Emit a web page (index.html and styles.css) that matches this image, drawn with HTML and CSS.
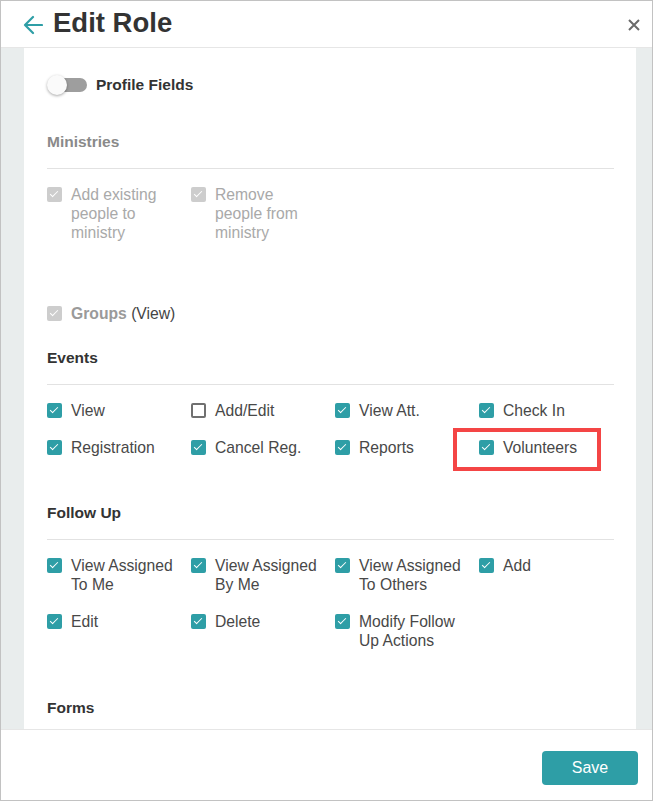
FILE: index.html
```html
<!DOCTYPE html>
<html lang="en">
<head>
    <meta charset="UTF-8">
    <meta name="viewport" content="width=device-width, initial-scale=1.0">
    <title>Edit Role</title>
    <link rel="stylesheet" href="styles.css">
</head>
<body>
    <div class="modal">
        <header class="modal-header">
            <svg class="back-icon" width="20" height="20" viewBox="0 0 20 20">
                <path d="M19 10H2M10 2L2 10l8 8" fill="none" stroke="#2e9ea6" stroke-width="2.2" stroke-linecap="round" stroke-linejoin="round"/>
            </svg>
            <h1 class="title">Edit Role</h1>
            <svg class="close-icon" width="12" height="12" viewBox="0 0 12 12">
                <path d="M1 1l10 10M11 1L1 11" stroke="#6a6a6a" stroke-width="2"/>
            </svg>
        </header>

        <div class="modal-body">
            <div class="panel">
                <div class="toggle-row">
                    <span class="switch"><span class="knob"></span></span>
                    <span class="toggle-label">Profile Fields</span>
                </div>

                <section class="perm disabled">
                    <h2 class="perm-title">Ministries</h2>
                    <div class="perm-grid">
                        <label class="item"><span class="cb on"></span><span class="text">Add existing people to ministry</span></label>
                        <label class="item"><span class="cb on"></span><span class="text">Remove people from ministry</span></label>
                    </div>
                    <label class="item single"><span class="cb on"></span><span class="text"><b>Groups</b> <span class="dark">(View)</span></span></label>
                </section>

                <section class="perm">
                    <h2 class="perm-title">Events</h2>
                    <div class="perm-grid">
                        <label class="item"><span class="cb on"></span><span class="text">View</span></label>
                        <label class="item"><span class="cb"></span><span class="text">Add/Edit</span></label>
                        <label class="item"><span class="cb on"></span><span class="text">View Att.</span></label>
                        <label class="item"><span class="cb on"></span><span class="text">Check In</span></label>
                        <label class="item"><span class="cb on"></span><span class="text">Registration</span></label>
                        <label class="item"><span class="cb on"></span><span class="text">Cancel Reg.</span></label>
                        <label class="item"><span class="cb on"></span><span class="text">Reports</span></label>
                        <label class="item highlight"><span class="cb on"></span><span class="text">Volunteers</span></label>
                    </div>
                </section>

                <section class="perm">
                    <h2 class="perm-title">Follow Up</h2>
                    <div class="perm-grid">
                        <label class="item"><span class="cb on"></span><span class="text">View Assigned To Me</span></label>
                        <label class="item"><span class="cb on"></span><span class="text">View Assigned By Me</span></label>
                        <label class="item"><span class="cb on"></span><span class="text">View Assigned To Others</span></label>
                        <label class="item"><span class="cb on"></span><span class="text">Add</span></label>
                        <label class="item"><span class="cb on"></span><span class="text">Edit</span></label>
                        <label class="item"><span class="cb on"></span><span class="text">Delete</span></label>
                        <label class="item"><span class="cb on"></span><span class="text">Modify Follow Up Actions</span></label>
                    </div>
                </section>

                <section class="perm">
                    <h2 class="perm-title">Forms</h2>
                </section>
            </div>
        </div>

        <footer class="modal-footer">
            <button class="save-btn">Save</button>
        </footer>
    </div>
</body>
</html>
```

FILE: styles.css
```css
html, body {
    margin: 0;
    height: 100%;
    font-family: "Liberation Sans", Arial, sans-serif;
    color: #444;
}

.modal {
    width: 653px;
    height: 801px;
    box-sizing: border-box;
    border: 1px solid #c2c2c2;
    display: flex;
    flex-direction: column;
    background: #fff;
    overflow: hidden;
}

.modal-header {
    height: 46px;
    flex: none;
    border-bottom: 1px solid #e6e6e6;
    display: flex;
    align-items: center;
    padding: 0 12px 0 22px;
}

.back-icon {
    flex: none;
    margin-top: 1px;
}

.title {
    margin: -3px 0 0 10px;
    font-size: 27.5px;
    font-weight: bold;
    color: #333;
    flex: 1;
}

.close-icon {
    flex: none;
    margin-top: 1px;
}

.modal-body {
    flex: 1;
    min-height: 0;
    background: #e9eded;
    display: flex;
    padding: 0 16px 0 23px;
}

.panel {
    flex: 1;
    background: #fff;
    padding: 27px 22px 0 23px;
    overflow: hidden;
}

.toggle-row {
    display: flex;
    align-items: center;
    height: 20px;
}

.switch {
    position: relative;
    width: 40px;
    height: 20px;
    flex: none;
}
.switch::before {
    content: '';
    position: absolute;
    left: 8px;
    top: 3px;
    width: 32px;
    height: 14px;
    border-radius: 7px;
    background: #9e9e9e;
}
.knob {
    position: absolute;
    left: 0;
    top: 0;
    width: 20px;
    height: 20px;
    border-radius: 50%;
    background: #fafafa;
    box-shadow: 0 1px 3px rgba(0, 0, 0, 0.35);
}

.toggle-label {
    margin-left: 9px;
    font-weight: bold;
    font-size: 15.5px;
    color: #333;
}

.perm {
    margin-top: 37px;
}
.perm + .perm {
    margin-top: 24px;
}
.perm + .perm:last-child {
    margin-top: 26px;
}

.perm-title {
    margin: 0;
    font-size: 15.5px;
    line-height: 19px;
    font-weight: bold;
    color: #333;
    padding-bottom: 17px;
    border-bottom: 1px solid #e2e2e2;
}

.perm-grid {
    display: grid;
    grid-template-columns: 144px 144px 144px 1fr;
    row-gap: 18px;
    padding: 16px 0 22px;
}

.item {
    display: flex;
    align-items: flex-start;
    font-size: 15.7px;
    line-height: 19px;
    color: #484848;
    position: relative;
}

.text {
    margin-left: 9px;
    max-width: 108px;
}

.cb {
    flex: none;
    position: relative;
    width: 15px;
    height: 15px;
    margin-top: 2px;
    box-sizing: border-box;
    border: 2px solid #707070;
    border-radius: 2px;
    background: #fff;
}
.cb.on {
    border: none;
    background: #2e9ea6;
}
.cb.on::after {
    content: '';
    position: absolute;
    left: 5px;
    top: 2px;
    width: 3px;
    height: 7px;
    border: solid #fff;
    border-width: 0 1.5px 1.5px 0;
    transform: rotate(45deg);
}

.disabled .perm-title {
    color: #8a8a8a;
}
.disabled .item {
    color: #a9a9a9;
}
.disabled .cb.on {
    background: #cdcdcd;
}
.disabled .perm-grid {
    padding-bottom: 62px;
}
.disabled + .perm {
    margin-top: 25px;
}
.single .text {
    max-width: none;
}
.single b {
    color: #9a9a9a;
}
.single .dark {
    color: #444;
}

.highlight::after {
    content: '';
    position: absolute;
    left: -26px;
    right: 13px;
    top: -10px;
    bottom: -14px;
    border: 4px solid #f44545;
}

.modal-footer {
    flex: none;
    height: 71px;
    border-top: 1px solid #e6e6e6;
    display: flex;
    justify-content: flex-end;
    align-items: flex-start;
    padding: 21px 14px 0 0;
    box-sizing: border-box;
}

.save-btn {
    width: 96px;
    height: 34px;
    border: none;
    border-radius: 4px;
    background: #2e9ea6;
    color: #fff;
    font-family: "Liberation Sans", Arial, sans-serif;
    font-size: 16px;
}
```
